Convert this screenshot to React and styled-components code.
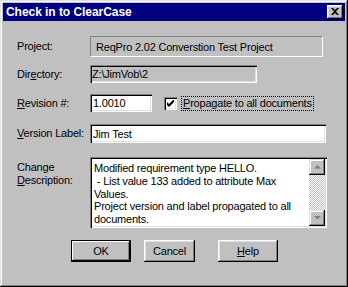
import React from "react";
import styled, { createGlobalStyle } from "styled-components";

const Global = createGlobalStyle`
  html, body { margin: 0; padding: 0; background: #c0c0c0; }
  body { font-family: "Liberation Sans", Arial, sans-serif; font-size: 11px; color: #000; }
  * { box-sizing: border-box; }
`;

const Window = styled.div`
  width: 348px;
  height: 287px;
  background: #c0c0c0;
  padding: 3px;
  box-shadow: inset -1px -1px #000, inset 1px 1px #dfdfdf, inset -2px -2px #808080, inset 2px 2px #fff;
  display: flex;
  flex-direction: column;
`;

const TitleBar = styled.div`
  height: 18px;
  background: #000080;
  display: flex;
  align-items: center;
  justify-content: space-between;
  padding: 0 2px 0 3px;
`;

const Title = styled.span`
  color: #fff;
  font-weight: bold;
  font-size: 12px;
  letter-spacing: -0.05px;
`;

const CloseButton = styled.div`
  width: 16px;
  height: 14px;
  background: #c0c0c0;
  box-shadow: inset -1px -1px #000, inset 1px 1px #fff, inset -2px -2px #808080, inset 2px 2px #dfdfdf;
  display: flex;
  align-items: center;
  justify-content: center;
  padding-bottom: 1px;
`;

const Body = styled.div`
  padding-left: 14px;
  display: flex;
  flex-direction: column;
  letter-spacing: -0.2px;
`;

const Row = styled.div`
  display: flex;
  align-items: ${(p) => (p.$top ? "flex-start" : "center")};
  margin-top: ${(p) => p.$gap}px;
`;

const Label = styled.div`
  width: 73px;
  flex: none;
  line-height: 13px;
  padding-top: ${(p) => p.$pt || 0}px;
`;

const U = styled.span`
  text-decoration: underline;
`;

const StaticBox = styled.div`
  width: ${(p) => p.$w}px;
  height: ${(p) => p.$h}px;
  border: 1px solid;
  border-color: #808080 #fff #fff #808080;
  display: flex;
  align-items: center;
  padding-left: 5px;
`;

const ReadOnlyField = styled.div`
  width: ${(p) => p.$w}px;
  height: ${(p) => p.$h}px;
  background: #c0c0c0;
  box-shadow: inset 1px 1px #808080, inset 2px 2px #000, inset -1px -1px #fff, inset -2px -2px #dfdfdf;
  display: flex;
  align-items: center;
  padding-left: 2px;
`;

const Field = styled(ReadOnlyField)`
  background: #fff;
  padding-left: 3px;
`;

const CheckBox = styled.div`
  width: 13px;
  height: 13px;
  margin-left: 12px;
  background: #fff;
  box-shadow: inset 1px 1px #808080, inset 2px 2px #000, inset -1px -1px #fff, inset -2px -2px #dfdfdf;
  display: flex;
  align-items: center;
  justify-content: center;
  flex: none;
`;

const FocusLabel = styled.div`
  margin-left: 4px;
  height: 15px;
  padding: 0 1px;
  border: 1px dotted #000;
  display: flex;
  align-items: center;
`;

const TextArea = styled.div`
  width: 237px;
  height: 71px;
  background: #fff;
  box-shadow: inset 1px 1px #808080, inset 2px 2px #000, inset -1px -1px #fff, inset -2px -2px #dfdfdf;
  padding: 2px;
  display: flex;
`;

const TextContent = styled.div`
  flex: 1;
  padding: 3px 2px 0 2px;
  line-height: 12.75px;
  overflow: hidden;
  white-space: pre-wrap;
`;

const ScrollBar = styled.div`
  width: 16px;
  display: flex;
  flex-direction: column;
  background: repeating-conic-gradient(#c0c0c0 0 25%, #fff 0 50%) 0 0 / 2px 2px;
`;

const ScrollTrack = styled.div`
  flex: 1;
`;

const ArrowButton = styled.div`
  width: 16px;
  height: 16px;
  background: #c0c0c0;
  box-shadow: inset -1px -1px #000, inset 1px 1px #dfdfdf, inset -2px -2px #808080, inset 2px 2px #fff;
  display: flex;
  align-items: center;
  justify-content: center;
`;

const ButtonRow = styled.div`
  display: flex;
  margin-top: 12px;
  padding-left: 54px;
`;

const Button = styled.div`
  width: ${(p) => p.$w}px;
  height: 22px;
  margin-left: ${(p) => p.$ml || 0}px;
  background: #c0c0c0;
  display: flex;
  align-items: center;
  justify-content: center;
  box-shadow: ${(p) =>
    p.$default
      ? "inset 0 0 0 1px #000, inset -2px -2px #000, inset 2px 2px #fff, inset -3px -3px #808080"
      : "inset -1px -1px #000, inset 1px 1px #fff, inset -2px -2px #808080, inset 2px 2px #dfdfdf"};
`;

const Arrow = ({ up }) => (
  <svg width="9" height="6" viewBox="0 0 9 6">
    <polygon points={up ? "4.5,1 1,4.5 8,4.5" : "1,1 8,1 4.5,4.5"} fill="#808080" />
  </svg>
);

export default function App() {
  return (
    <>
      <Global />
      <Window>
        <TitleBar>
          <Title>Check in to ClearCase</Title>
          <CloseButton>
            <svg width="8" height="7" viewBox="0 0 8 7">
              <path d="M0 0h2l2 2 2-2h2L5 3.5 8 7H6L4 5 2 7H0l3-3.5z" fill="#000" />
            </svg>
          </CloseButton>
        </TitleBar>
        <Body>
          <Row $gap={15}>
            <Label>Project:</Label>
            <StaticBox $w={233} $h={21}>ReqPro 2.02 Converstion Test Project</StaticBox>
          </Row>
          <Row $gap={8}>
            <Label>
              Dir<U>e</U>ctory:
            </Label>
            <ReadOnlyField $w={167} $h={18}>Z:\JimVob\2</ReadOnlyField>
          </Row>
          <Row $gap={11}>
            <Label>
              <U>R</U>evision #:
            </Label>
            <Field $w={62} $h={18}>1.0010</Field>
            <CheckBox>
              <svg width="7" height="7" viewBox="0 0 7 7">
                <path d="M0 2L2 4L6 0H7V2L2 7L0 5Z" fill="#000" />
              </svg>
            </CheckBox>
            <FocusLabel>
              <span>
                <U>P</U>ropagate to all documents
              </span>
            </FocusLabel>
          </Row>
          <Row $gap={12}>
            <Label>
              <U>V</U>ersion Label:
            </Label>
            <Field $w={236} $h={19}>Jim Test</Field>
          </Row>
          <Row $gap={14} $top>
            <Label $pt={4}>
              Change
              <br />
              <U>D</U>escription:
            </Label>
            <TextArea>
              <TextContent>
                {"Modified requirement type HELLO.\n - List value 133 added to attribute Max Values.\nProject version and label propagated to all documents."}
              </TextContent>
              <ScrollBar>
                <ArrowButton>
                  <Arrow up />
                </ArrowButton>
                <ScrollTrack />
                <ArrowButton>
                  <Arrow />
                </ArrowButton>
              </ScrollBar>
            </TextArea>
          </Row>
          <ButtonRow>
            <Button $w={60} $default>OK</Button>
            <Button $w={51} $ml={13}>Cancel</Button>
            <Button $w={60} $ml={23}>
              <span>
                <U>H</U>elp
              </span>
            </Button>
          </ButtonRow>
        </Body>
      </Window>
    </>
  );
}
